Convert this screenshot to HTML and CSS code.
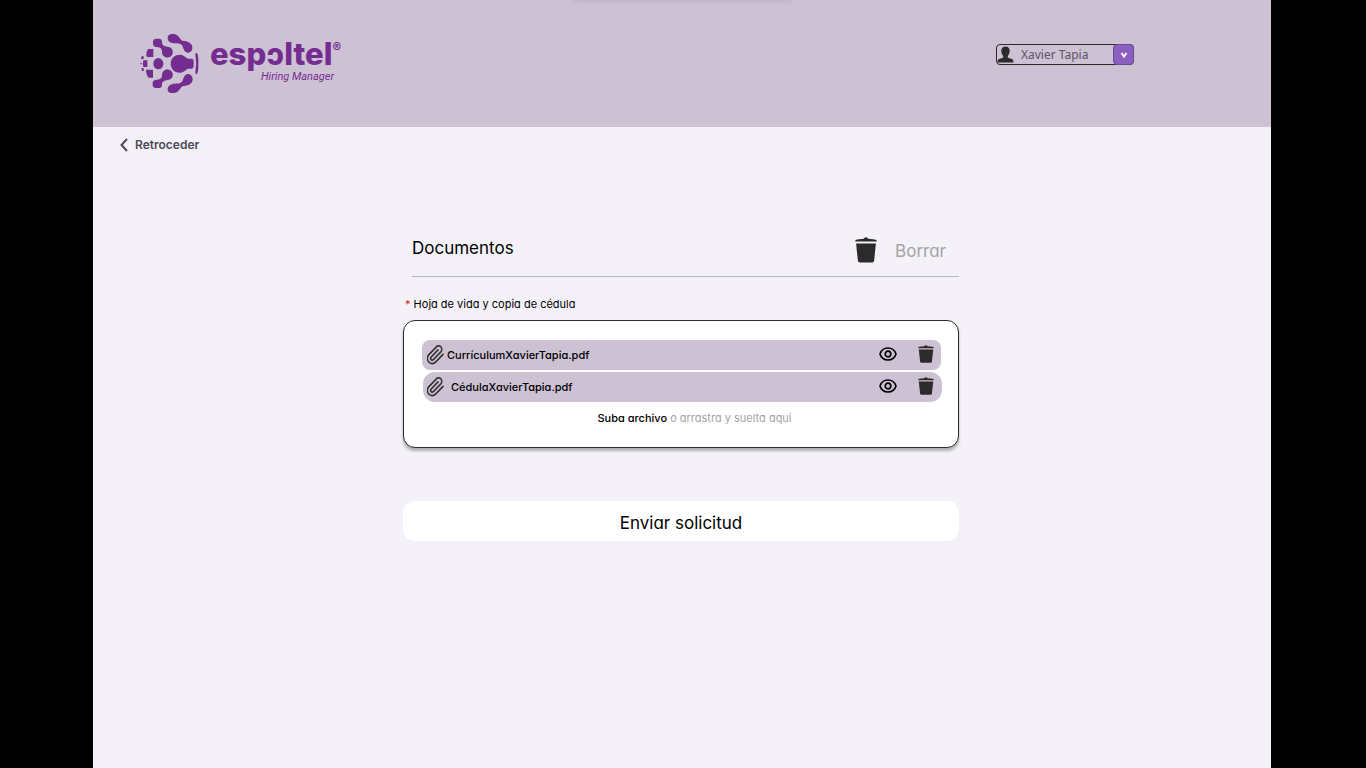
FILE: index.html
```html
<!DOCTYPE html>
<html lang="es">
<head>
<meta charset="utf-8">
<meta name="viewport" content="width=device-width, initial-scale=1">
<title>Espoltel Hiring Manager</title>
<link rel="stylesheet" href="styles.css">
</head>
<body>
<svg class="sprite" aria-hidden="true">
  <symbol id="trash" viewBox="1 0 20 26" preserveAspectRatio="none">
    <path d="M1 4.600Q1 2.800 2.800 2.500L9 1.700Q9.300 .200 11 .200T13 1.700L19.200 2.500Q21 2.800 21 4.600Z"/>
    <path d="M2 6.400H20L18.400 23.800Q18.200 25.600 16.500 25.600H5.500Q3.800 25.600 3.600 23.800Z"/>
  </symbol>
  <symbol id="eye" viewBox="0 0 18 14">
    <path d="M1 7C2.200 3.200 5.200 1 9 1S15.800 3.200 17 7C15.800 10.800 12.800 13 9 13S2.200 10.800 1 7Z" fill="none" stroke="currentColor" stroke-width="1.700" stroke-linejoin="round"/>
    <circle cx="9" cy="7" r="2.800" fill="none" stroke="currentColor" stroke-width="1.700"/>
  </symbol>
  <symbol id="clip" viewBox="2 0 20 24">
    <path transform="translate(12 12) scale(.96 1.040) rotate(1) translate(-12 -12)" d="M21.440 11.050l-9.190 9.190a6 6 0 0 1-8.490-8.490l9.190-9.190a4 4 0 0 1 5.660 5.660l-9.200 9.190a2 2 0 0 1-2.830-2.830l8.490-8.480" fill="none" stroke="currentColor" stroke-width="1.800" stroke-linecap="round"/>
  </symbol>
</svg>
<div class="page">
  <header class="header">
    <div class="brand">
      <svg class="brand-mark" viewBox="30 24 180 183" aria-hidden="true">
        <path d="M113 41C112 30 121 26 131 27C143 28 147 36 152 43C157 50 163 47 172 50C184 54 188 61 187 70C186 80 180 84 172 83C160 80 161 68 156 61C151 54 142 56 130 55C120 53 114 49 113 41Z"/>
        <path d="M69 48Q70 42 77 41H90Q96 42 96 50C95 61 103 64 113 65C132 66 134 92 117 97C103 99 96 91 96 80C96 68 88 67 77 66Q69 64 69 57Z"/>
        <path d="M113 191C112 202 121 205 131 204C143 203 147 196 152 189C157 182 163 184 172 181C184 178 188 170 188 162C187 151 180 146 172 147C160 151 161 163 156 170C151 176 142 175 130 176C120 178 114 183 113 191Z"/>
        <path d="M68 182Q69 188 77 189H90Q96 188 96 181C95 170 103 166 113 165C132 164 134 138 117 134C103 132 96 140 96 151C96 162 88 164 77 165Q68 166 68 174Z"/>
        <path d="M149 89C161 89 166 97 174 101H187Q191 103 191 108V124Q191 130 186 131H174C166 135 161 143 149 143C113 143 113 89 149 89Z"/>
        <ellipse cx="85" cy="116" rx="15" ry="17"/>
        <path d="M54 72H70V96H52L49 93Q48 80 54 72ZM48 134H69V158H56Q48 150 48 134ZM40 106H52V126H40Q37 117 40 106ZM35 94H41V102H33ZM34 129H41V138H36ZM31 114H35V118H31Z"/>
        <path d="M196 88Q196 83 201 84Q206 93 205 116Q206 139 201 147Q196 149 196 142Q201 116 196 88Z"/>
      </svg>
      <div class="brand-text">
        <div class="brand-name">espɔltel<sup class="brand-reg">®</sup></div>
        <div class="brand-sub">Hiring Manager</div>
      </div>
    </div>
    <div class="user">
      <svg class="user-icon" viewBox="0 0 17 17" aria-hidden="true"><path d="M8.500 .500C11.500 .500 13 2.500 12.700 5.500C12.500 8 11.500 9 10.700 10.200C10.600 11.700 11.500 12 13.500 12.600C15.800 13.300 16.500 14 16.500 16.500H.500C.500 14 1.200 13.300 3.500 12.600C5.500 12 6.400 11.700 6.300 10.200C5.500 9 4.500 8 4.300 5.500C4 2.500 5.500 .500 8.500 .500Z"/></svg>
      <select class="user-select" aria-label="Usuario"><option>Xavier Tapia</option></select>
      <span class="user-arrow"><svg viewBox="0 0 8 6" aria-hidden="true"><path d="M1.500 1L4 4.500L6.500 1"/></svg></span>
    </div>
    <div class="top-shadow"></div>
  </header>
  <a class="back" href="#"><svg viewBox="0 0 8 14" aria-hidden="true"><path d="M7 1L1.500 7L7 13"/></svg>Retroceder</a>
  <main class="content">
    <div class="heading">
      <h1 class="title">Documentos</h1>
      <button class="clear" type="button"><svg aria-hidden="true"><use href="#trash"/></svg>Borrar</button>
    </div>
    <label class="label" for="files"><span class="required">*</span> Hoja de vida y copia de cédula</label>
    <section class="dropzone">
      <ul class="files">
        <li class="file">
          <svg class="clip" aria-hidden="true"><use href="#clip"/></svg>
          <span class="file-name">CurrículumXavierTapia.pdf</span>
          <button class="view" type="button" aria-label="Ver currículum"><svg aria-hidden="true"><use href="#eye"/></svg></button>
          <button class="remove" type="button" aria-label="Borrar currículum"><svg aria-hidden="true"><use href="#trash"/></svg></button>
        </li>
        <li class="file file-round">
          <svg class="clip" aria-hidden="true"><use href="#clip"/></svg>
          <span class="file-name">CédulaXavierTapia.pdf</span>
          <button class="view" type="button" aria-label="Ver cédula"><svg aria-hidden="true"><use href="#eye"/></svg></button>
          <button class="remove" type="button" aria-label="Borrar cédula"><svg aria-hidden="true"><use href="#trash"/></svg></button>
        </li>
      </ul>
      <label class="upload" for="files"><strong>Suba archivo</strong> o arrastra y suelta aqui</label>
      <input class="file-input" id="files" type="file" multiple>
    </section>
    <button class="submit" type="button">Enviar solicitud</button>
  </main>
</div>
</body>
</html>
```
FILE: styles.css
```css
* { box-sizing: border-box; }
body {
  margin: 0;
  background: #000;
  color: #000;
  font-family: Inter, "Liberation Sans", sans-serif;
  font-feature-settings: "cv11";
}
button { border: 0; padding: 0; background: none; font: inherit; font-feature-settings: inherit; cursor: pointer; }
svg { display: block; flex: none; }
.sprite { position: absolute; width: 0; height: 0; }
.page { min-height: 100vh; margin: 0 95px 0 93px; background: #f4f2f8; }
.header {
  position: relative;
  display: flex;
  justify-content: space-between;
  align-items: flex-start;
  padding: 33px 137px 33px 47px;
  background: #cdc2d3;
}
.top-shadow {
  position: absolute;
  top: -5px;
  left: 482px;
  width: 216px;
  height: 4px;
  box-shadow: 0 0 6px rgba(60, 40, 80, 0.25);
}
.brand { display: flex; gap: 10px; color: #752c90; }
.brand-mark { width: 60px; height: 61px; fill: #752c90; }
.brand-text { display: flex; flex-direction: column; }
.brand-name { padding-top: 4px; font-size: 31px; line-height: 33px; font-weight: 800; white-space: nowrap; }
.brand-reg { font-size: 13px; line-height: 13px; vertical-align: 13px; }
.brand-sub { padding-left: 51px; font: italic 11px/14px Roboto, sans-serif; }
.user {
  position: relative;
  display: flex;
  align-items: center;
  width: 138px;
  height: 21px;
  margin-top: 11px;
  border: 1px solid #2b2b2b;
  border-radius: 4px;
}
.user-icon { width: 17px; height: 17px; fill: #2b2b2b; }
.user-select {
  flex: 1;
  min-width: 0;
  height: 19px;
  padding: 0 0 0 7px;
  border: 0;
  background: none;
  appearance: none;
  color: #5b5367;
  font: 12px/19px "Noto Sans", sans-serif;
}
.user-arrow {
  position: absolute;
  top: -1px;
  right: -1px;
  display: grid;
  place-items: center;
  width: 21px;
  height: 21px;
  border: 1px solid #6b4a98;
  border-radius: 4px;
  background: #8a5fc0;
  pointer-events: none;
}
.user-arrow svg { width: 8px; height: 6px; fill: none; stroke: #fff; stroke-width: 2; }
.back {
  display: inline-flex;
  align-items: center;
  gap: 7px;
  margin: 8px 0 0 27px;
  color: #4c4858;
  font-size: 12px;
  line-height: 20px;
  font-weight: 600;
  text-decoration: none;
}
.back svg { width: 8px; height: 14px; fill: none; stroke: #4c4858; stroke-width: 2; }
.content { width: 100%; max-width: 558px; margin: 74px auto 0; padding-right: 2px; }
.heading {
  display: flex;
  justify-content: space-between;
  align-items: flex-start;
  height: 47px;
  margin-left: 9px;
  border-bottom: 1px solid #b9b7be;
}
.title { margin: 6px 0 0; font-size: 17px; line-height: 24px; font-weight: 400; }
.clear {
  display: flex;
  align-items: center;
  gap: 18px;
  margin: 7px 13px 0 0;
  color: #a3a2a6;
  font-size: 17px;
  line-height: 28px;
}
.clear svg { width: 22px; height: 26px; margin-bottom: 2px; fill: #2b2b2b; }
.label { display: block; margin: 18px 0 7px 2px; font-size: 11px; line-height: 18px; }
.required { color: #e02020; }
.dropzone {
  display: flex;
  flex-direction: column;
  align-items: center;
  padding: 19px 16px 20px 18px;
  border: 1px solid #2b2b2b;
  border-radius: 12px;
  background: #fff;
  box-shadow: 0 3px 3px rgba(0, 0, 0, 0.28);
}
.files { display: grid; gap: 2px; width: 100%; margin: 0; padding: 0; list-style: none; }
.file {
  display: flex;
  align-items: center;
  height: 30px;
  margin-right: 1px;
  padding: 0 7px 1px 5px;
  border-radius: 8px;
  background: #cdc2d3;
  font-size: 11px;
  font-weight: 500;
}
.file-round { margin: 0 0 0 1px; padding: 0 8px 1px 4px; border-radius: 12px; }
.clip { width: 17px; height: 20px; color: #2b2b2b; }
.file-name { flex: 1; padding-left: 3px; line-height: 18px; }
.file-round .file-name { padding-left: 7px; }
.view, .remove { padding-bottom: 2px; }
.view svg { width: 18px; height: 14px; }
.remove { margin-left: 21px; }
.remove svg { width: 16px; height: 18px; fill: #2b2b2b; }
.upload { margin: 7px 0 0 25px; color: #a3a2a6; font-size: 11px; line-height: 18px; cursor: pointer; }
.upload strong { color: #000; font-weight: 500; }
.file-input { position: absolute; width: 1px; height: 1px; opacity: 0; }
.submit {
  width: 100%;
  margin-top: 53px;
  padding-top: 4px;
  border-radius: 12px;
  background: #fff;
  color: #000;
  font-size: 17px;
  line-height: 36px;
}
```
